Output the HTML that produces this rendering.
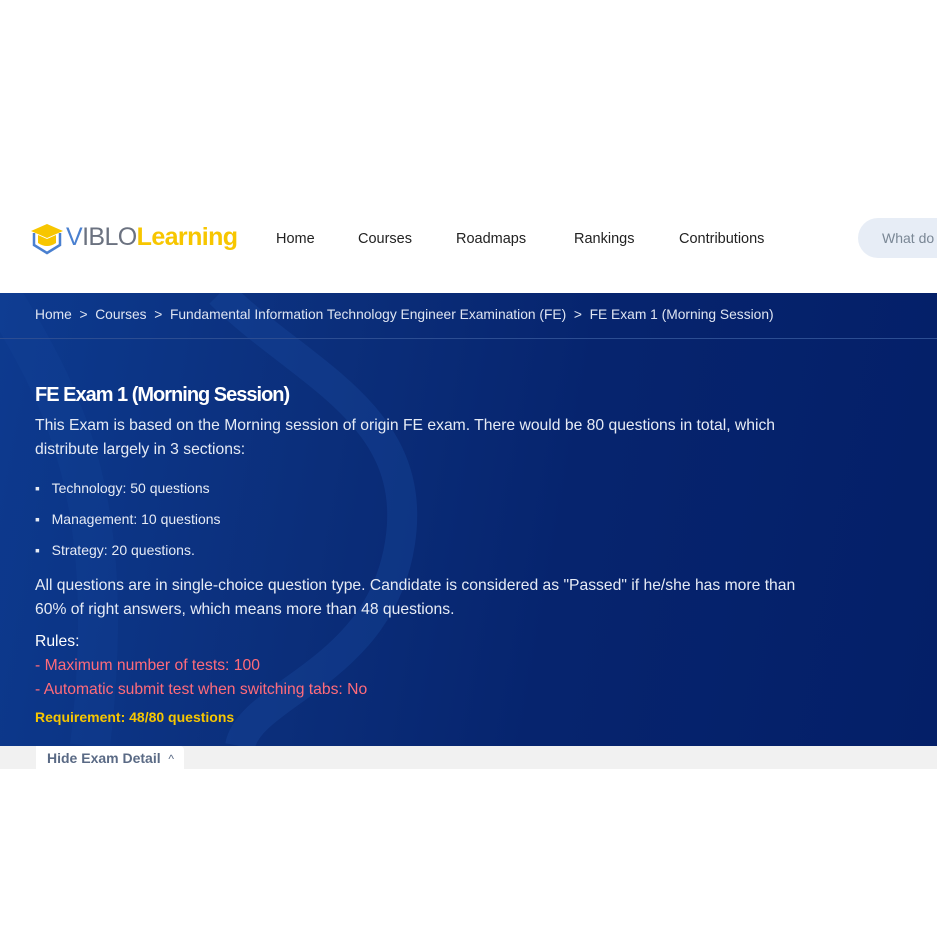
<!DOCTYPE html>
<html><head><meta charset="utf-8"><style>
*{margin:0;padding:0;box-sizing:border-box}
body{width:937px;height:937px;background:#fff;font-family:"Liberation Sans",sans-serif;position:relative;overflow:hidden}
.nav a{position:absolute;top:231px;font-size:14.5px;color:#222}
.hero{position:absolute;top:293px;left:0;width:937px;height:453px;background:linear-gradient(100deg,#0d3a8f 0%,#0b2e7a 35%,#06246e 60%,#041f68 100%);overflow:hidden;color:#e6ebf5}
.t{position:absolute;left:35px}
</style></head><body>
<svg style="position:absolute;left:30px;top:221px" width="34" height="34" viewBox="0 0 34 34">
<path d="M4 12 L4 24 L17 32 L30 24 L30 12" fill="none" stroke="#4a80d0" stroke-width="2.5"/>
<path d="M17 3 L33 10 L17 17 L1 10Z" fill="#f7c600"/>
<path d="M8 14 L8 22 Q17 28 26 22 L26 14 L17 18Z" fill="#f7c600"/>
</svg>
<div style="position:absolute;left:66px;top:223px;font-size:25px;font-weight:500;letter-spacing:-0.6px"><span style="color:#4a80d0">V</span><span style="color:#6b7280">IBLO</span><span style="color:#f7c600;font-weight:700">Learning</span></div>
<div class="nav"><a style="left:276px">Home</a><a style="left:358px">Courses</a><a style="left:456px">Roadmaps</a><a style="left:574px">Rankings</a><a style="left:679px">Contributions</a></div>
<div style="position:absolute;left:858px;top:218px;width:120px;height:40px;border-radius:20px;background:#e7edf6;color:#7a8795;font-size:14px;padding:12px 0 0 24px">What do</div>
<div class="hero">
<svg style="position:absolute;left:0;top:0" width="937" height="453"><path d="M220 0 C300 80 420 120 400 250 C380 380 250 400 240 453" fill="none" stroke="#1a4aa0" stroke-width="30" opacity=".35"/><path d="M0 0 C60 100 120 200 90 453" fill="none" stroke="#1a4aa0" stroke-width="40" opacity=".2"/></svg>
<div style="position:absolute;left:0;top:45px;width:937px;height:1px;background:#2c4d92"></div>
<div class="t" style="top:14px;font-size:13.8px;color:#dfe5f2">Home &nbsp;&gt;&nbsp; Courses &nbsp;&gt;&nbsp; Fundamental Information Technology Engineer Examination (FE) &nbsp;&gt;&nbsp; FE Exam 1 (Morning Session)</div>
<div class="t" style="top:91px;font-size:20px;font-weight:700;color:#fff;letter-spacing:-1px">FE Exam 1 (Morning Session)</div>
<div class="t" style="top:121px;font-size:15.7px;line-height:24px;width:780px">This Exam is based on the Morning session of origin FE exam. There would be 80 questions in total, which distribute largely in 3 sections:</div>
<div class="t" style="top:180px;font-size:14px;line-height:31px">▪ &nbsp;&nbsp;Technology: 50 questions<br>▪ &nbsp;&nbsp;Management: 10 questions<br>▪ &nbsp;&nbsp;Strategy: 20 questions.</div>
<div class="t" style="top:281px;font-size:15.7px;line-height:24px;width:790px">All questions are in single-choice question type. Candidate is considered as "Passed" if he/she has more than 60% of right answers, which means more than 48 questions.</div>
<div class="t" style="top:337px;font-size:15.7px;line-height:24px"><span style="color:#fff">Rules:</span><br><span style="color:#ff6b7a">- Maximum number of tests: 100<br>- Automatic submit test when switching tabs: No</span></div>
<div class="t" style="top:416px;font-size:14px;font-weight:700;color:#f7c600">Requirement: 48/80 questions</div>
</div>
<div style="position:absolute;top:746px;left:0;width:937px;height:23px;background:#f1f1f1"></div>
<div style="position:absolute;top:746px;left:36px;width:148px;height:23px;background:#fff;border-radius:0 4px 0 0;color:#5a6a85;font-size:14px;font-weight:700;padding:4px 0 0 11px">Hide Exam Detail &nbsp;<span style="font-weight:400;font-size:12px">^</span></div>
</body></html>
